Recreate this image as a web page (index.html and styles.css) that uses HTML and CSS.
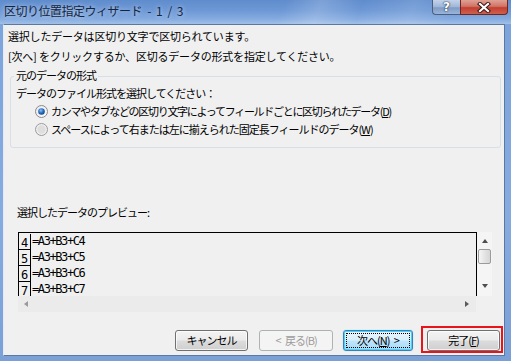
FILE: index.html
```html
<!DOCTYPE html>
<html lang="ja">
<head>
    <meta charset="UTF-8">
    <title>区切り位置指定ウィザード</title>
    <link rel="stylesheet" href="styles.css">
</head>
<body>
    <div class="window">
        <div class="titlebar">
            <span class="title">区切り位置指定ウィザード - 1 / 3</span>
            <div class="caption-buttons">
                <span class="cap-btn help">?</span>
                <span class="cap-btn close">
                    <svg width="14" height="11" viewBox="0 0 14 11">
                        <path d="M3 2 L11 9 M11 2 L3 9" stroke="#3b1a16" stroke-width="4.2" stroke-linecap="square" fill="none"/>
                        <path d="M3 2 L11 9 M11 2 L3 9" stroke="#ffffff" stroke-width="2.2" stroke-linecap="square" fill="none"/>
                    </svg>
                </span>
            </div>
        </div>

        <div class="client">
            <p class="intro">選択したデータは区切り文字で区切られています。</p>
            <p class="intro">[次へ] をクリックするか、区切るデータの形式を指定してください。</p>

            <fieldset class="group">
                <legend>元のデータの形式</legend>
                <div class="prompt">データのファイル形式を選択してください：</div>
                <label class="radio tight">
                    <svg class="dot" width="13" height="13" viewBox="0 0 13 13">
                        <defs>
                            <linearGradient id="ring" x1="0" y1="0" x2="1" y2="1">
                                <stop offset="0" stop-color="#e9e9e9"/>
                                <stop offset="1" stop-color="#fdfdfd"/>
                            </linearGradient>
                            <radialGradient id="blue" cx="0.4" cy="0.35" r="0.7">
                                <stop offset="0" stop-color="#8cc4f5"/>
                                <stop offset="0.5" stop-color="#2d72c4"/>
                                <stop offset="1" stop-color="#0e3f86"/>
                            </radialGradient>
                        </defs>
                        <circle cx="6.5" cy="6.5" r="6" fill="url(#ring)" stroke="#8a8a8a"/>
                        <circle cx="6.5" cy="6.5" r="3.3" fill="url(#blue)"/>
                    </svg>
                    カンマやタブなどの区切り文字によってフィールドごとに区切られたデータ(<u>D</u>)
                </label>
                <label class="radio">
                    <svg class="dot" width="13" height="13" viewBox="0 0 13 13">
                        <circle cx="6.5" cy="6.5" r="6" fill="#eeeeee" stroke="#9a9a9a"/>
                        <circle cx="6.5" cy="6.5" r="4.2" fill="#dedede"/>
                    </svg>
                    スペースによって右または左に揃えられた固定長フィールドのデータ(<u>W</u>)
                </label>
            </fieldset>

            <div class="preview-label">選択したデータのプレビュー:</div>

            <div class="preview">
                <div class="preview-top">
                    <div class="grid">
                        <div class="row"><span class="rownum">4</span><span class="cell">=A3+B3+C4</span></div>
                        <div class="row"><span class="rownum">5</span><span class="cell">=A3+B3+C5</span></div>
                        <div class="row"><span class="rownum">6</span><span class="cell">=A3+B3+C6</span></div>
                        <div class="row"><span class="rownum">7</span><span class="cell">=A3+B3+C7</span></div>
                    </div>
                    <div class="vscroll">
                        <span class="arrow up"></span>
                        <span class="thumb"></span>
                        <span class="arrow down"></span>
                    </div>
                </div>
                <div class="preview-bottom">
                    <div class="hscroll">
                        <span class="arrow left"></span>
                        <span class="arrow right"></span>
                    </div>
                    <div class="corner"></div>
                </div>
            </div>

            <div class="buttons">
                <button class="btn cancel">キャンセル</button>
                <button class="btn back" disabled>&lt; 戻る(B)</button>
                <button class="btn next"><span class="focus">次へ(<u>N</u>) &gt;</span></button>
                <span class="highlight"><button class="btn finish">完了(<u>F</u>)</button></span>
            </div>
        </div>
    </div>
</body>
</html>
```

FILE: styles.css
```css
body {
    margin: 0;
    font-family: "Noto Sans CJK JP", "Noto Sans", sans-serif;
    font-size: 11px;
    letter-spacing: -1px;
    color: #000;
    background: #ffffff;
}

.window {
    width: 511px;
    height: 361px;
    display: flex;
    flex-direction: column;
    background: linear-gradient(to bottom, #7ba3db 0%, #86abdf 60%, #7aa0d6 100%);
}

/* title bar */
.titlebar {
    height: 24px;
    display: flex;
    justify-content: space-between;
    background:
        linear-gradient(110deg, rgba(255,255,255,0) 0%, rgba(255,255,255,0) 55%, rgba(255,255,255,0.18) 62%, rgba(255,255,255,0) 70%, rgba(255,255,255,0.12) 80%, rgba(255,255,255,0) 88%),
        linear-gradient(to bottom, #5f8ccd 0%, #6e99d6 45%, #86ace0 80%, #a2c0e8 100%);
}

.title {
    padding: 3px 0 0 4px;
    font-size: 12px;
    letter-spacing: -0.5px;
    word-spacing: 3px;
    line-height: 16px;
    color: #14253f;
    text-shadow: 0 0 5px rgba(255, 255, 255, 0.7);
}

.caption-buttons {
    display: flex;
    margin-right: 3px;
    height: 15px;
}

.cap-btn {
    height: 14px;
    border: 1px solid #4a5f7f;
    border-top: none;
    display: flex;
    align-items: center;
    justify-content: center;
}

.help {
    width: 27px;
    border-radius: 0 0 0 4px;
    border-right: none;
    background: linear-gradient(to bottom, #c3d3ea 0%, #9fb6d8 50%, #7f9cc6 55%, #9bb4d8 100%);
    color: #fff;
    font-family: "DejaVu Sans", sans-serif;
    font-weight: bold;
    font-size: 12px;
    letter-spacing: 0;
    line-height: 14px;
    text-shadow: 0 0 2px #1e2e48, 0 0 1px #1e2e48;
}

.close {
    width: 46px;
    border-color: #6e2620;
    border-radius: 0 0 4px 0;
    background: linear-gradient(to bottom, #e0a195 0%, #d27466 45%, #c23f30 55%, #cf5f4e 100%);
}

/* client area */
.client {
    margin: 0 6px 0 3px;
    height: 332px;
    box-sizing: border-box;
    border: 1px solid #5a78a0;
    border-left-color: #e3ebf6;
    background: #f0f0f0;
    padding: 1px 0 0 4px;
}

.intro {
    margin: 0;
    line-height: 20px;
    letter-spacing: -0.2px;
}

.group {
    margin: 2px 3px 0 2px;
    padding: 0 0 9px 5px;
    border: 1px solid #d5dfe5;
    border-radius: 3px;
}

.group legend {
    padding: 0 2px 3px 2px;
    margin-left: -2px;
    line-height: 14px;
}

.prompt {
    line-height: 17px;
}

.radio {
    display: flex;
    align-items: center;
    height: 18px;
}

.radio.tight {
    letter-spacing: -1.3px;
}

.dot {
    margin: 0 3px 0 19px;
}

.preview-label {
    margin: 56px 0 0 9px;
    line-height: 16px;
}

/* data preview */
.preview {
    margin: 12px 0 0 10px;
    width: 474px;
}

.preview-top {
    display: flex;
    height: 64px;
}

.grid {
    width: 459px;
    box-sizing: border-box;
    border: 1px solid #000;
    border-bottom: none;
    padding-top: 1px;
    overflow: hidden;
    background: #f0f0f0;
}

.row {
    display: flex;
    height: 16px;
    font-family: "DejaVu Sans Mono", monospace;
    font-size: 12px;
    letter-spacing: -1.4px;
}

.rownum {
    width: 12px;
    box-sizing: border-box;
    border-right: 1px solid #000;
    border-bottom: 1px solid #000;
    padding-left: 2px;
    line-height: 18px;
}

.cell {
    line-height: 15px;
    padding-left: 1px;
}

.vscroll {
    width: 15px;
    background: #f5f5f5;
    display: flex;
    flex-direction: column;
    align-items: center;
    padding-top: 7px;
    box-sizing: border-box;
}

.arrow {
    width: 0;
    height: 0;
    border-style: solid;
}

.arrow.up {
    border-width: 0 3.5px 4px 3.5px;
    border-color: transparent transparent #4d4d4d transparent;
}

.arrow.down {
    margin-top: 20px;
    border-width: 4px 3.5px 0 3.5px;
    border-color: #4d4d4d transparent transparent transparent;
}

.thumb {
    margin-top: 6px;
    width: 13px;
    height: 15px;
    box-sizing: border-box;
    border: 1px solid #9b9b9b;
    border-radius: 2px;
    background: linear-gradient(to right, #f6f6f6, #e4e4e4 50%, #d6d6d6);
}

.preview-bottom {
    display: flex;
    height: 16px;
}

.hscroll {
    width: 458px;
    background: #ebebeb;
    display: flex;
    align-items: center;
    justify-content: space-between;
    padding: 0 7px 0 6px;
    box-sizing: border-box;
}

.arrow.left {
    border-width: 3.5px 4px 3.5px 0;
    border-color: transparent #9a9a9a transparent transparent;
}

.arrow.right {
    border-width: 3.5px 0 3.5px 4px;
    border-color: transparent transparent transparent #5a5a5a;
}

.corner {
    flex: 1;
    background: #f0f0f0;
}

/* buttons */
.buttons {
    display: flex;
    align-items: flex-start;
    justify-content: flex-end;
    margin-top: 14px;
    padding-right: 1px;
}

.btn {
    height: 21px;
    margin-top: 4px;
    padding: 0;
    font-family: "Noto Sans CJK JP", "Noto Sans", sans-serif;
    font-size: 11px;
    letter-spacing: -1px;
    word-spacing: 3px;
    line-height: 19px;
    color: #000;
    border: 1px solid #707070;
    border-radius: 3px;
    background: linear-gradient(to bottom, #f3f3f3 0%, #ebebeb 48%, #dcdcdc 52%, #cfcfcf 100%);
    box-shadow: inset 0 0 0 1px rgba(255, 255, 255, 0.7);
}

.cancel {
    width: 73px;
}

.back {
    width: 74px;
    margin-left: 11px;
    color: #9c9c9c;
    border-color: #adb2b5;
    background: #f4f4f4;
    box-shadow: none;
}

.next {
    width: 70px;
    margin-left: 10px;
    border-color: #3c7fb1;
    background: linear-gradient(to bottom, #eaf6fd 0%, #d9f0fc 48%, #bee6fd 52%, #a7d9f5 100%);
    box-shadow: inset 0 0 0 1px #48d0ff, 0 0 1px #48d0ff;
}

.next .focus {
    display: block;
    margin: 2px;
    line-height: 13px;
    border: 1px dotted #000;
}

.highlight {
    margin-left: 8px;
    border: 2px solid #e8141a;
    padding: 2px 1px 0 4px;
}

.finish {
    width: 73px;
    margin-top: 0;
}
```
